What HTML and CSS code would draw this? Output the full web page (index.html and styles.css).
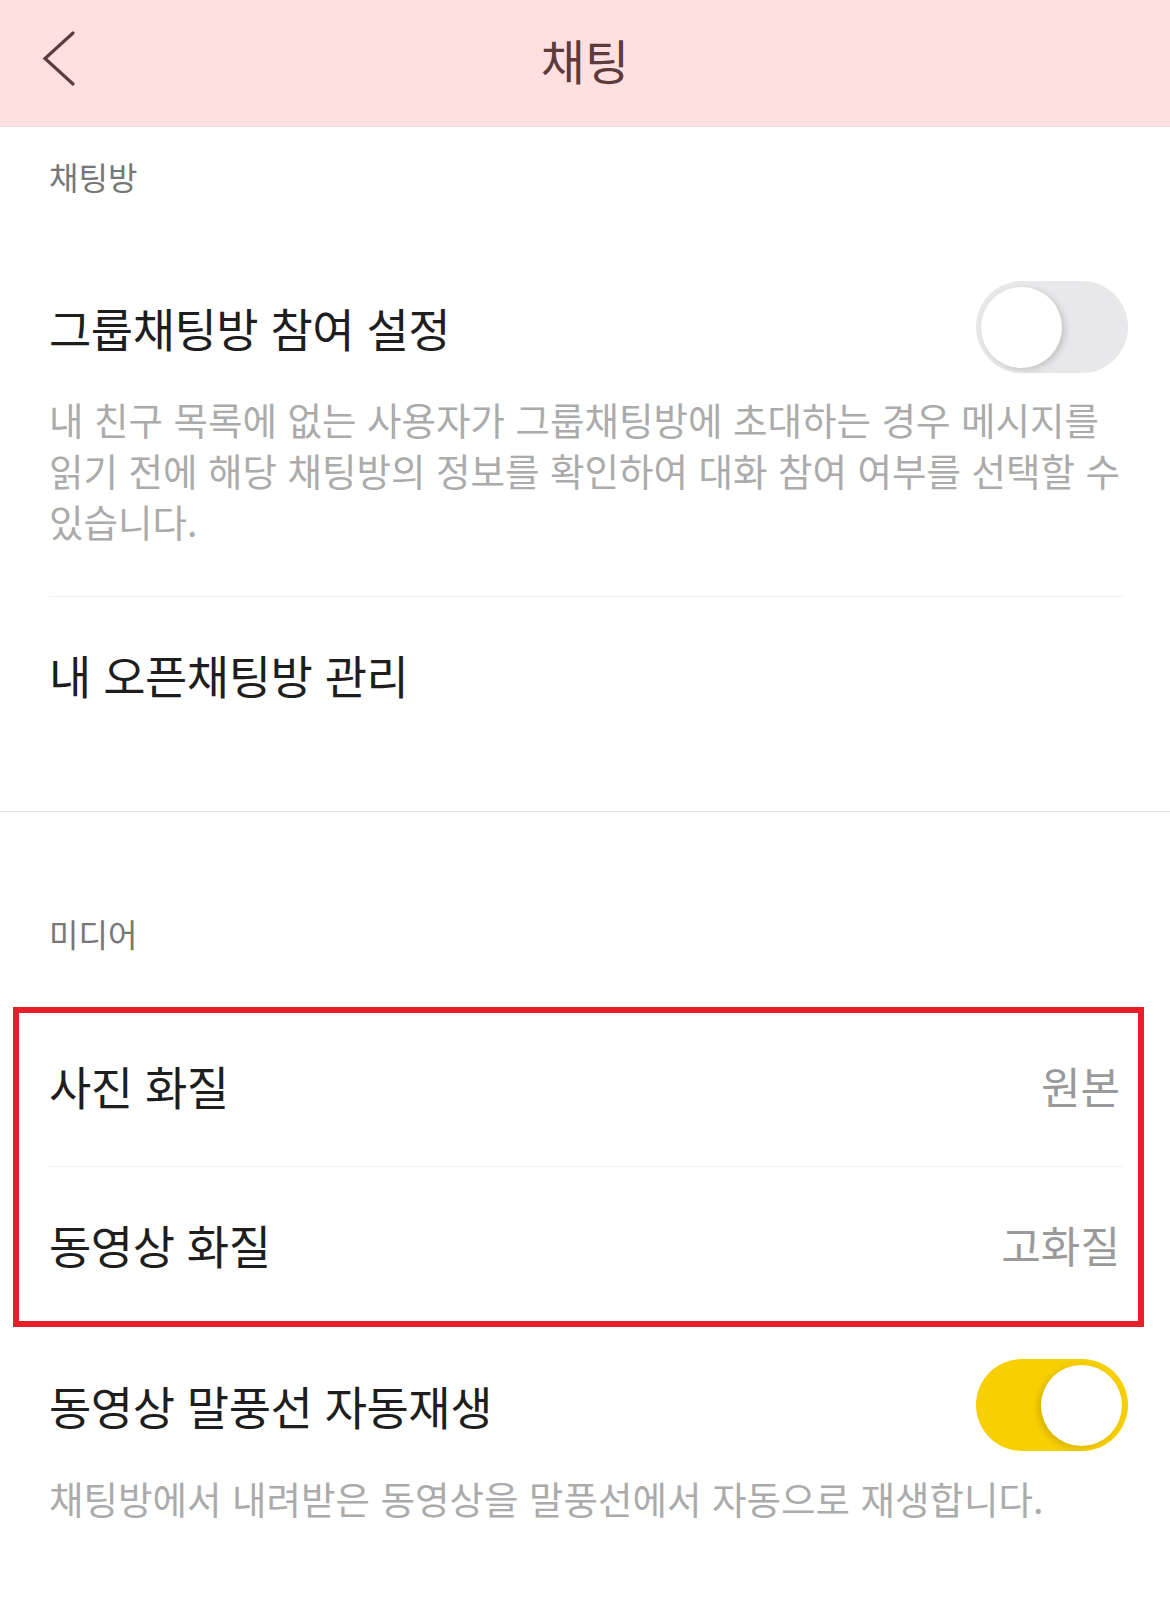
FILE: index.html
```html
<!DOCTYPE html>
<html lang="ko">
<head>
  <meta charset="UTF-8">
  <title>채팅</title>
  <meta name="viewport" content="width=device-width, initial-scale=1.0">
  <link rel="stylesheet" href="styles.css">
</head>
<body>
  <header class="topbar">
    <button class="back" aria-label="뒤로">
      <svg width="34" height="56" viewBox="0 0 34 56">
        <path d="M31 2 L3 27.5 L31 53" fill="none" stroke="#5b3d3d" stroke-width="3.2" stroke-linecap="round" stroke-linejoin="miter"/>
      </svg>
    </button>
    <h1>채팅</h1>
    <div></div>
  </header>

  <section class="group group-chat">
    <div class="group-title">채팅방</div>

    <div class="item item-toggle">
      <div class="item-head">
        <span class="item-label">그룹채팅방 참여 설정</span>
        <span class="switch"></span>
      </div>
      <p class="item-desc">내 친구 목록에 없는 사용자가 그룹채팅방에 초대하는 경우 메시지를 읽기 전에 해당 채팅방의 정보를 확인하여 대화 참여 여부를 선택할 수 있습니다.</p>
    </div>

    <div class="divider"></div>

    <div class="item item-link">
      <span class="item-label">내 오픈채팅방 관리</span>
    </div>
  </section>

  <section class="group group-media">
    <div class="group-title">미디어</div>

    <div class="highlight">
      <div class="item item-value first">
        <span class="item-label">사진 화질</span>
        <span class="item-val">원본</span>
      </div>
      <div class="divider"></div>
      <div class="item item-value">
        <span class="item-label">동영상 화질</span>
        <span class="item-val">고화질</span>
      </div>
    </div>

    <div class="item item-toggle last">
      <div class="item-head">
        <span class="item-label">동영상 말풍선 자동재생</span>
        <span class="switch on"></span>
      </div>
      <p class="item-desc">채팅방에서 내려받은 동영상을 말풍선에서 자동으로 재생합니다.</p>
    </div>
  </section>
</body>
</html>
```

FILE: styles.css
```css
body {
  margin: 0;
  background-color: #fff;
  font-family: "Noto Sans CJK KR", "Noto Sans", sans-serif;
  color: #1e1e1e;
}

.topbar {
  display: grid;
  grid-template-columns: 120px 1fr 120px;
  align-items: center;
  height: 126px;
  background-color: #ffdfe0;
  border-bottom: 1px solid #ebdcdc;
}

.back {
  display: flex;
  align-items: center;
  padding: 0 0 8px 42px;
  background: none;
  border: none;
  cursor: pointer;
}

.topbar h1 {
  margin: 0 0 8px;
  text-align: center;
  font-size: 48px;
  font-weight: 400;
  color: #5b3b3b;
  line-height: 60px;
}

.group-title {
  padding-left: 49px;
  font-size: 32px;
  line-height: 40px;
  color: #777;
}

.group-chat {
  padding-top: 29px;
  padding-bottom: 60px;
  border-bottom: 1px solid #e4e4e4;
}

.group-chat .group-title {
  margin-bottom: 76px;
}

.group-media {
  padding-top: 101px;
}

.group-media .group-title {
  margin-bottom: 54px;
}

.item-label {
  font-size: 46px;
  letter-spacing: -0.5px;
  color: #1e1e1e;
}

.item-head {
  display: flex;
  justify-content: space-between;
  align-items: center;
  height: 110px;
  padding: 0 42px 0 49px;
}

.item-toggle {
  padding-bottom: 50px;
}

.item-toggle.last {
  padding-top: 23px;
}

.item-desc {
  margin: 11px 47px 0 49px;
  font-size: 37.5px;
  line-height: 51px;
  color: #ababab;
  word-break: keep-all;
}

.item-toggle.last .item-desc {
  margin-top: 12px;
}

.divider {
  height: 1px;
  margin: 0 47px 0 49px;
  background-color: #f0f0f0;
}

.item-link {
  display: flex;
  align-items: center;
  height: 154px;
  padding-left: 49px;
}

/* 빨간 테두리 강조 영역 */
.highlight {
  margin: 0 26px 0 13px;
  border: 6px solid #e81f2a;
}

.highlight .divider {
  margin: 0 15px 0 30px;
}

.item-value {
  display: flex;
  justify-content: space-between;
  align-items: center;
  height: 154px;
  padding: 0 18px 0 30px;
}

.item-value.first {
  height: 143px;
  padding-bottom: 10px;
}

.item-val {
  font-size: 43px;
  color: #9a9a9a;
}

.switch {
  position: relative;
  display: inline-block;
  width: 152px;
  height: 92px;
  border-radius: 46px;
  background-color: #e8e8ea;
}

.switch::after {
  content: "";
  position: absolute;
  top: 6px;
  left: 5px;
  width: 81px;
  height: 81px;
  border-radius: 50%;
  background-color: #fff;
  box-shadow: 3px 2px 6px rgba(0, 0, 0, 0.16);
}

.switch.on {
  background-color: #f8cf00;
}

.switch.on::after {
  left: auto;
  right: 6px;
  box-shadow: -3px 2px 6px rgba(0, 0, 0, 0.14);
}
```
